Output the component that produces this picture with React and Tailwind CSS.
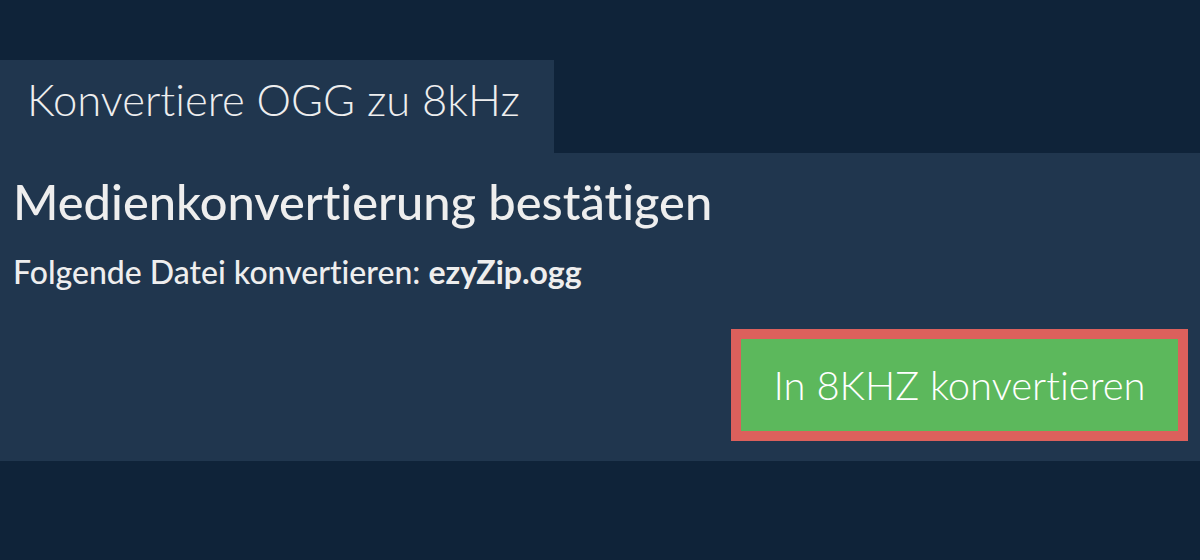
import React from 'react';

const App = () => {
    return (
        <div className="w-[1200px] h-[560px] bg-[#0f2339] pt-[60px] text-[#eeeeee] font-['Lato','Noto_Sans',sans-serif] [font-variant-ligatures:none]">
            {/* Tab header */}
            <div className="w-[554px] h-[93px] bg-[#20364e] pl-[27px] pt-[18px]">
                <h2 className="text-[43.6px] font-light leading-none">Konvertiere OGG zu 8kHz</h2>
            </div>

            {/* Confirm panel */}
            <div className="h-[308px] bg-[#20364e] pl-[13px] pr-[12px] pt-[24px]">
                <h1 className="text-[48.8px] font-medium leading-none">Medienkonvertierung bestätigen</h1>
                <p className="mt-[30px] text-[32px] font-medium leading-none">
                    Folgende Datei konvertieren: <strong className="font-bold">ezyZip.ogg</strong>
                </p>
                <div className="flex justify-end mt-[41px]">
                    <button className="border-[10px] border-[#dc605c] bg-[#5cb85c] w-[457px] h-[112px] text-[40px] font-light text-white">
                        In 8KHZ konvertieren
                    </button>
                </div>
            </div>
        </div>
    );
};

export default App;
